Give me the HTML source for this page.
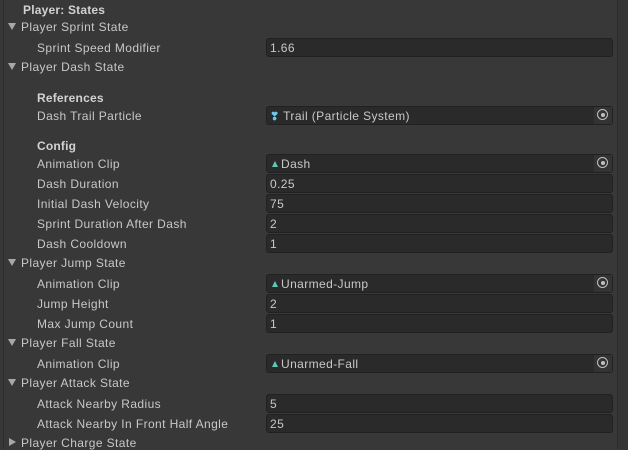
<!DOCTYPE html><html><head><style>
body{margin:0;width:628px;height:449px;background:#383838;position:relative;overflow:hidden;font-family:"Liberation Sans",sans-serif;font-size:12px;letter-spacing:0.4px;color:#c8c8c8}
.t{position:absolute;white-space:nowrap;line-height:14px;margin-top:1px}
.b{font-weight:bold;color:#d2d2d2;letter-spacing:0.2px}
.f{position:absolute;left:266px;width:345px;height:17px;background:#2a2a2a;border:1px solid #212121;border-radius:3px;line-height:18px;box-sizing:content-box}
.f span{position:absolute;left:3px;top:0}
.o{position:absolute;right:0;top:0;width:18px;height:17px;background:#333}
.o i{position:absolute;left:3px;top:2px;width:9px;height:9px;border:1.5px solid #c0c0c0;border-radius:50%}
.o i:after{content:"";position:absolute;left:2.5px;top:2.5px;width:4px;height:4px;background:#c0c0c0;border-radius:50%}
.tri{position:absolute;left:8px;width:0;height:0;border-left:4px solid transparent;border-right:4px solid transparent;border-top:7px solid #a8a8a8}
.tr{position:absolute;left:9px;width:0;height:0;border-top:4px solid transparent;border-bottom:4px solid transparent;border-left:7px solid #a8a8a8}
.ln{position:absolute;left:3px;top:0;width:1px;height:449px;background:#2c2c2c}
.sb{position:absolute;left:617px;top:0;width:11px;height:449px;background:#353535;border-left:1px solid #2c2c2c}
.ac{display:inline-block;width:0;height:0;border-left:3.5px solid transparent;border-right:3.5px solid transparent;border-bottom:6px solid #60c8b0;margin:0 3px 1px 2px}
</style></head><body>
<div class="ln"></div><div class="sb"></div>
<div class="t b" style="left:23px;top:2px">Player: States</div>
<div class="tri" style="top:23px"></div><div class="t" style="left:21px;top:19px">Player Sprint State</div>
<div class="t" style="left:37px;top:40px">Sprint Speed Modifier</div><div class="f" style="top:38px"><span>1.66</span></div>
<div class="tri" style="top:63px"></div><div class="t" style="left:21px;top:59px">Player Dash State</div>
<div class="t b" style="left:37px;top:90px">References</div>
<div class="t" style="left:37px;top:108px">Dash Trail Particle</div><div class="f" style="top:106px"><span><b style="color:#6cc8f0;font-size:11px">❣</b> Trail (Particle System)</span><div class="o"><i></i></div></div>
<div class="t b" style="left:37px;top:138px">Config</div>
<div class="t" style="left:37px;top:156px">Animation Clip</div><div class="f" style="top:154px"><span><i class="ac"></i>Dash</span><div class="o"><i></i></div></div>
<div class="t" style="left:37px;top:176px">Dash Duration</div><div class="f" style="top:174px"><span>0.25</span></div>
<div class="t" style="left:37px;top:196px">Initial Dash Velocity</div><div class="f" style="top:194px"><span>75</span></div>
<div class="t" style="left:37px;top:216px">Sprint Duration After Dash</div><div class="f" style="top:214px"><span>2</span></div>
<div class="t" style="left:37px;top:236px">Dash Cooldown</div><div class="f" style="top:234px"><span>1</span></div>
<div class="tri" style="top:259px"></div><div class="t" style="left:21px;top:255px">Player Jump State</div>
<div class="t" style="left:37px;top:276px">Animation Clip</div><div class="f" style="top:274px"><span><i class="ac"></i>Unarmed-Jump</span><div class="o"><i></i></div></div>
<div class="t" style="left:37px;top:296px">Jump Height</div><div class="f" style="top:294px"><span>2</span></div>
<div class="t" style="left:37px;top:316px">Max Jump Count</div><div class="f" style="top:314px"><span>1</span></div>
<div class="tri" style="top:339px"></div><div class="t" style="left:21px;top:335px">Player Fall State</div>
<div class="t" style="left:37px;top:356px">Animation Clip</div><div class="f" style="top:354px"><span><i class="ac"></i>Unarmed-Fall</span><div class="o"><i></i></div></div>
<div class="tri" style="top:379px"></div><div class="t" style="left:21px;top:375px">Player Attack State</div>
<div class="t" style="left:37px;top:396px">Attack Nearby Radius</div><div class="f" style="top:394px"><span>5</span></div>
<div class="t" style="left:37px;top:416px">Attack Nearby In Front Half Angle</div><div class="f" style="top:414px"><span>25</span></div>
<div class="tr" style="top:438px"></div><div class="t" style="left:21px;top:435px">Player Charge State</div>
</body></html>
